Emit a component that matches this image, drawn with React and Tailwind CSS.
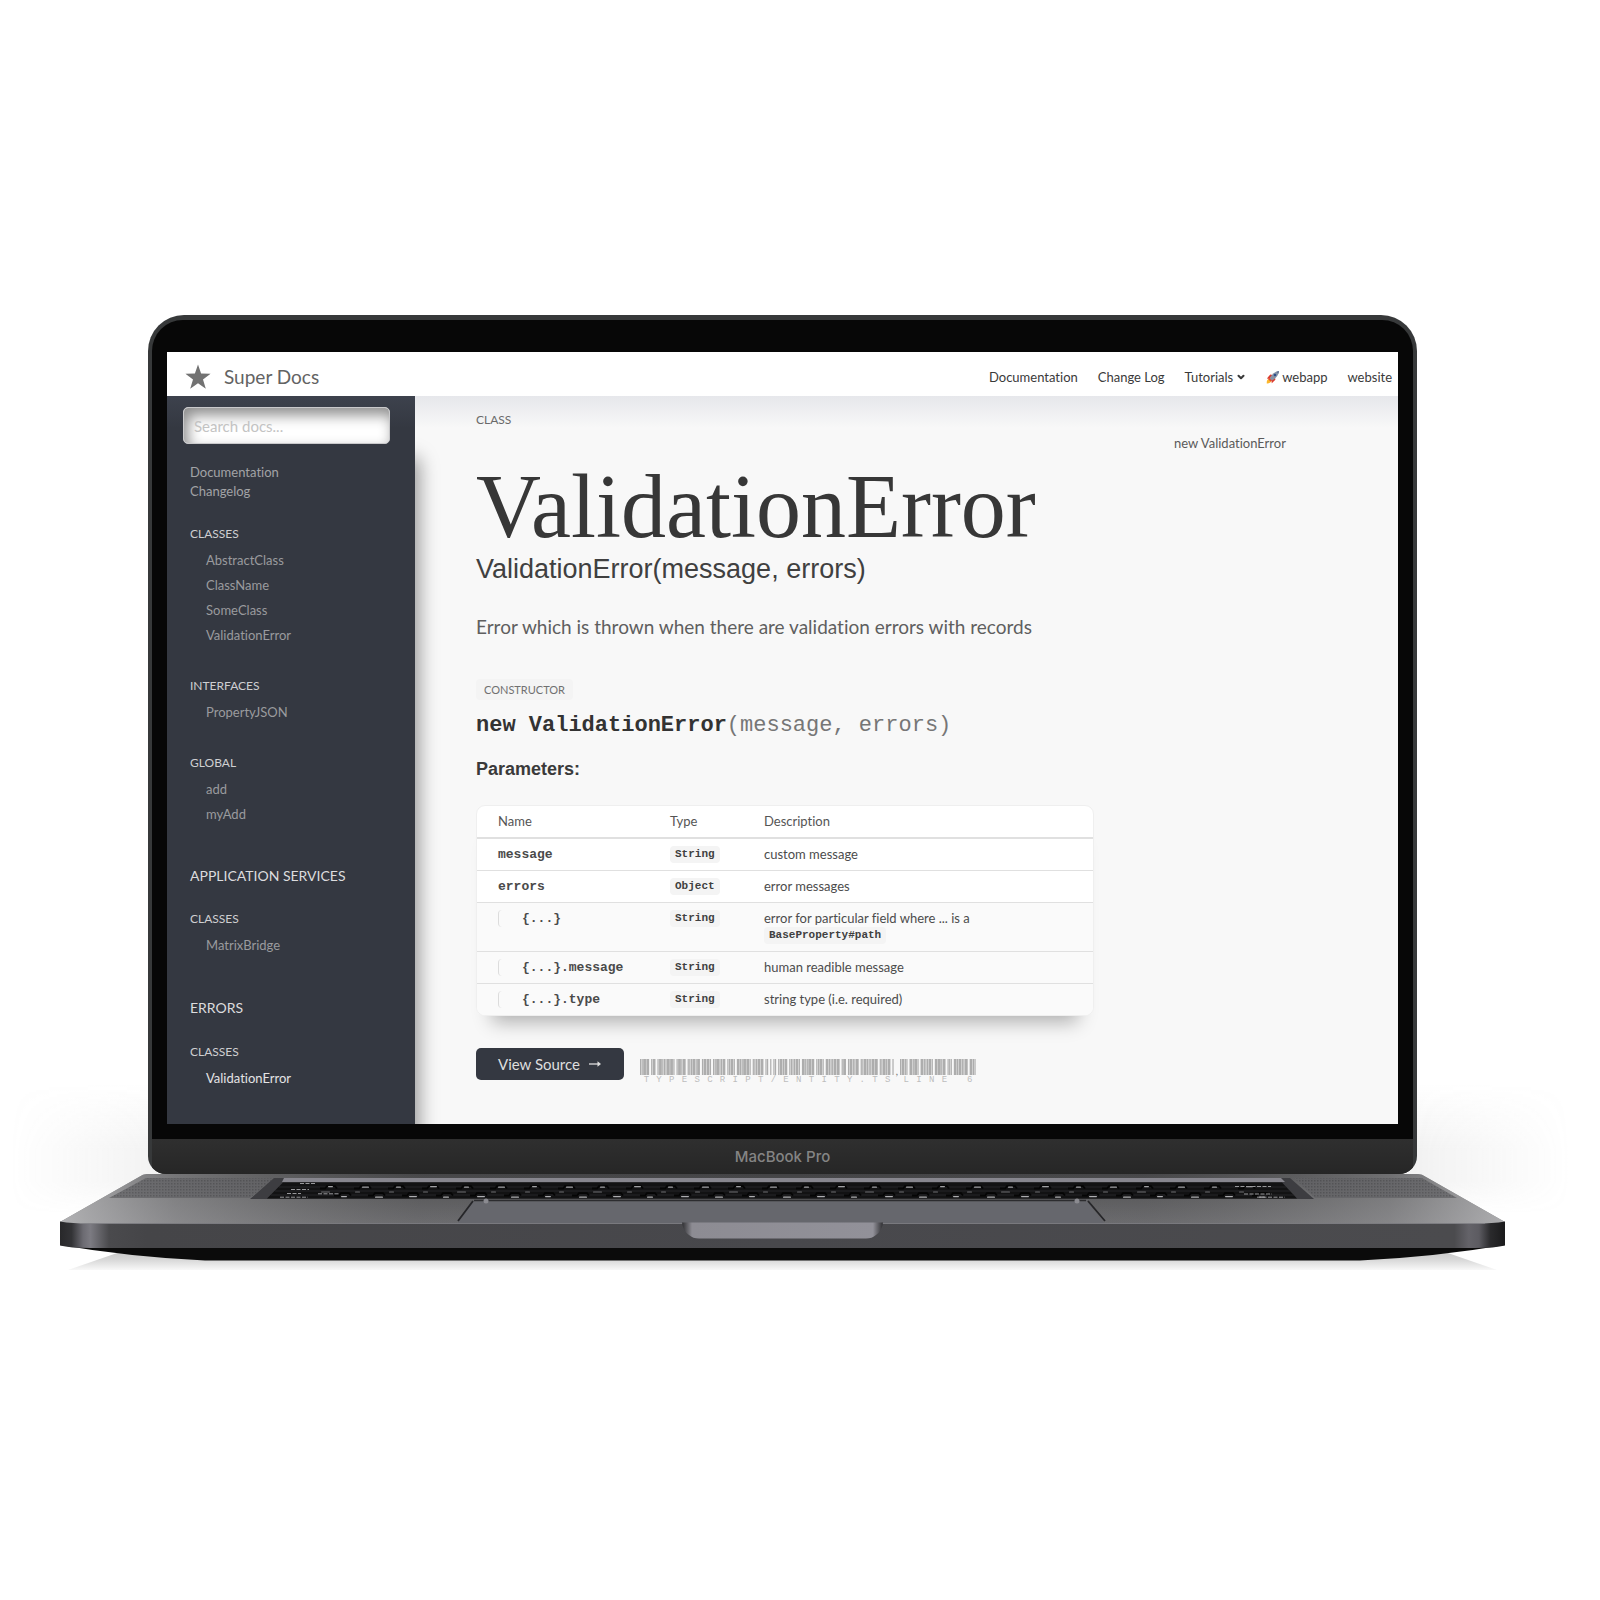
import React from "react";
import { ChevronDown } from "lucide-react";

const CODE39 = {
  A: "wnnnnwnnw", C: "wnwnnwnnn", E: "wnnnwwnnn", I: "nnwnnwwnn", L: "nnwnnnnww",
  N: "nnnnwnnww", P: "nnwnwnnwn", R: "wnnnnnwwn", S: "nnwnnnwwn", T: "nnnnwnwwn",
  Y: "wwnnwnnnn", ".": "wwnnnnwnn", "/": "nwnwnnnwn", " ": "nwwnnnwnn", 6: "nnwwwnnnn",
};

function Barcode({ text, className }) {
  const bars = [];
  let x = 0;
  [...text].forEach((ch) => {
    [...CODE39[ch]].forEach((e, i) => {
      const w = e === "w" ? 3 : 1;
      if (i % 2 === 0) bars.push([x, w]);
      x += w;
    });
    x += 1;
  });
  return (
    <span className={`flex flex-col ${className}`}>
      <svg className="h-4 w-full" viewBox={`0 0 ${x} 16`} preserveAspectRatio="none" aria-hidden="true">
        {bars.map(([bx, w]) => (
          <rect key={bx} x={bx} y="0" width={w + 0.5} height="16" fill="#adadad" />
        ))}
      </svg>
      <span className="flex font-['Liberation_Mono',monospace] text-[9px] leading-[11px] text-[#bdbdbd]">
        {[...text].map((ch, i) => (
          <span key={i} className="flex-1 text-center">{ch}</span>
        ))}
      </span>
    </span>
  );
}

function Rocket() {
  return (
    <svg className="size-[14px]" viewBox="0 0 14 14" role="img" aria-label="rocket">
      <path d="M0.8 13.4 C0.4 11 1.4 9.2 3.4 8.8 L5.4 10.8 C4.8 12.8 3 13.6 0.8 13.4Z" fill="#fbb72c" />
      <path d="M0.9 8.6 L4.2 4.6 L6.8 5 L3.6 8.9Z" fill="#dc3a2c" />
      <path d="M5.8 13.2 L5.4 10.4 L9 7.4 L9.4 9.8Z" fill="#dc3a2c" />
      <path d="M3.6 9 C5.4 4.6 8.4 1.6 13 1 C12.6 5.4 9.6 8.8 5.4 10.8Z" fill="#8693a6" />
      <path d="M10.4 1.8 L13 1 L12.4 3.8Z" fill="#5d6f94" />
      <circle cx="9" cy="5" r="1.3" fill="#2c4f8c" />
      <path d="M2.4 9.6 L4.6 11.6 L6 10.6 L3.6 8.2Z" fill="#e6452e" />
    </svg>
  );
}

function Section({ title, items, active }) {
  return (
    <section>
      <h3 className="text-[12px] leading-4 text-[#cfcfd1]">{title}</h3>
      <ul className="mt-1.5 pl-4 text-[13px] leading-[25px] text-[#9a9b9e]">
        {items.map((i) => (
          <li key={i}>
            <a href="#item" className={active ? "text-[#e4e4e5]" : ""}>{i}</a>
          </li>
        ))}
      </ul>
    </section>
  );
}

function Sidebar() {
  return (
    <aside className="relative z-10 w-[248px] shrink-0 bg-[#343841] bg-[linear-gradient(to_bottom,#3d424d,#343841_32px)] pt-[11px] pb-[33px] shadow-[4px_62px_18px_rgba(0,0,0,0.4)]">
      <input
        type="text"
        aria-label="Search docs"
        placeholder="Search docs..."
        className="ml-4 block h-[37px] w-[207px] rounded-[5px] border border-[#c9c9cb] bg-white px-2.5 text-[15px] placeholder-[#c3c3c3] shadow-[inset_4px_7px_14px_rgba(0,0,0,0.45)]"
      />
      <div className="pl-[23px]">
        <nav className="mt-[19px] flex flex-col text-[13px] leading-[19px] text-[#a2a3a6]">
          <a href="#documentation">Documentation</a>
          <a href="#changelog">Changelog</a>
        </nav>
        <div className="mt-[25px] flex flex-col gap-[30px]">
          <Section title="CLASSES" items={["AbstractClass", "ClassName", "SomeClass", "ValidationError"]} />
          <Section title="INTERFACES" items={["PropertyJSON"]} />
          <Section title="GLOBAL" items={["add", "myAdd"]} />
        </div>
        <h2 className="mt-[39px] mb-[25px] text-[14px] leading-5 text-[#dcdcde]">APPLICATION SERVICES</h2>
        <Section title="CLASSES" items={["MatrixBridge"]} />
        <h2 className="mt-10 mb-[26px] text-[14px] leading-5 text-[#dcdcde]">ERRORS</h2>
        <Section title="CLASSES" items={["ValidationError"]} active />
      </div>
    </aside>
  );
}

function TypeTag({ children }) {
  return (
    <div className="flex">
      <code className="rounded-[4px] bg-[#f4f4f4] px-[5px] font-['Liberation_Mono',monospace] text-[11px] leading-[17px] font-bold text-[#404040]">
        {children}
      </code>
    </div>
  );
}

const ROWS = [
  { name: "message", type: "String", text: "custom message" },
  { name: "errors", type: "Object", text: "error messages" },
  { name: "{...}", type: "String", text: "error for particular field where ... is a", code: "BaseProperty#path", sub: true },
  { name: "{...}.message", type: "String", text: "human readible message", sub: true },
  { name: "{...}.type", type: "String", text: "string type (i.e. required)", sub: true },
];

function Params() {
  return (
    <div className="mt-6 rounded-[9px] shadow-[0_22px_18px_-16px_rgba(0,0,0,0.3)]">
      <div className="overflow-hidden rounded-[9px] border border-[#efefef] bg-white">
        <table className="w-full table-fixed border-collapse text-left text-[13px] leading-[17px] text-[#4c4c4c]">
          <colgroup>
            <col className="w-[193px]" />
            <col className="w-[94px]" />
            <col />
          </colgroup>
          <thead>
            <tr className="text-[#555]">
              <th className="py-[7px] pl-[21px] font-normal">Name</th>
              <th className="font-normal">Type</th>
              <th className="font-normal">Description</th>
            </tr>
          </thead>
          <tbody>
            {ROWS.map((r, i) => (
              <tr
                key={r.name}
                className={`align-top ${i === 0 ? "border-t-2" : "border-t"} border-[#e0e0e0] ${r.sub ? "bg-[#fafafa]" : ""}`}
              >
                <td className="py-[7px] pl-[21px] font-['Liberation_Mono',monospace] font-bold text-[#4a4a4a]">
                  <span className={r.sub ? "block rounded-[4px] border-l border-[#dcdcdc] pl-[23px]" : "block"}>{r.name}</span>
                </td>
                <td className="py-[7px]"><TypeTag>{r.type}</TypeTag></td>
                <td className="py-[7px]">
                  {r.text}
                  {r.code && <TypeTag>{r.code}</TypeTag>}
                </td>
              </tr>
            ))}
          </tbody>
        </table>
      </div>
    </div>
  );
}

function DocsApp() {
  return (
    <div className="overflow-hidden bg-[#f8f8f8] font-['Lato',sans-serif] [font-variant-ligatures:none]">
      <header className="flex h-11 items-center justify-between bg-white pr-1.5 pl-[18px]">
        <a href="#home" className="flex items-center gap-[13px] pt-1.5 text-[19px] leading-6 text-[#636363]">
          <svg className="size-[26px]" viewBox="0 0 26 26" aria-hidden="true">
            <path d="M13 0.5 L16.1 9.6 L25.6 9.8 L18 15.6 L20.8 24.8 L13 19.3 L5.2 24.8 L8 15.6 L0.4 9.8 L9.9 9.6Z" fill="#727272" />
          </svg>
          Super Docs
        </a>
        <nav className="flex items-center gap-5 pt-1.5 text-[13px] leading-5 text-[#3a3a3a]">
          <a href="#documentation">Documentation</a>
          <a href="#log">Change Log</a>
          <button type="button" className="flex items-center gap-[3px]">
            Tutorials
            <ChevronDown className="size-[10px]" strokeWidth={5} />
          </button>
          <a href="#webapp" className="flex items-center gap-0.5"><Rocket />webapp</a>
          <a href="#website">website</a>
        </nav>
      </header>
      <div className="flex">
        <Sidebar />
        <main className="flex min-w-0 flex-1 bg-[linear-gradient(to_bottom,#e6e7eb,#f8f8f8_32px)] pt-4 pl-[61px]">
          <article className="w-[618px] shrink-0">
            <p className="text-[12px] leading-4 text-[#6a6a6a]">CLASS</p>
            <h1 className="mt-[34px] font-['Liberation_Serif',serif] text-[90px] leading-[90px] text-[#373737]">ValidationError</h1>
            <h2 className="mt-px font-['Liberation_Sans',sans-serif] text-[27px] leading-8 text-[#404040]">ValidationError(message, errors)</h2>
            <p className="mt-7 text-[19px] leading-7 text-[#5f5f5f]">Error which is thrown when there are validation errors with records</p>
            <span className="mt-[38px] block w-fit rounded-[4px] bg-[#f4f4f4] px-2 text-[11px] leading-[21px] text-[#707070]">CONSTRUCTOR</span>
            <h3 className="mt-3 font-['Liberation_Mono',monospace] text-[22px] leading-7 text-[#767676]">
              <b className="text-[#333]">new ValidationError</b>(message, errors)
            </h3>
            <h4 className="mt-[17px] font-['Liberation_Sans',sans-serif] text-[18px] leading-6 font-bold text-[#3a3a3a]">Parameters:</h4>
            <Params />
            <div className="mt-8 flex items-start">
              <button type="button" className="flex h-8 items-center gap-2 rounded-[5px] bg-[#343841] px-[22px] text-[15px] text-[#dedede]">
                View Source
                <svg className="h-2.5 w-3.5" viewBox="0 0 14 10" fill="none" stroke="#dedede" strokeWidth="1.3" aria-hidden="true">
                  <path d="M1 5 H11" />
                  <path d="M9.5 2.2 L13 5 L9.5 7.8Z" fill="#dedede" stroke="none" />
                </svg>
              </button>
              <div className="mt-[11px] ml-4 flex">
                <Barcode text="TYPESCRIPT/ENTITY.TS" className="w-[254px]" />
                <span className="w-1.5 pt-1 text-center text-[12px] leading-4 text-[#888]">,</span>
                <Barcode text="LINE 6" className="w-[76px]" />
              </div>
            </div>
          </article>
          <aside className="mt-[22px] ml-20 text-[13px] leading-[18px] text-[#5a5a5a]">
            <a href="#ctor">new ValidationError</a>
          </aside>
        </main>
      </div>
    </div>
  );
}

function Keys() {
  return Array.from({ length: 28 }, (_, i) => {
    const x = 268 + i * 34;
    return (
      <g key={i}>
        <path d={`M${x - 8} 14.5 h5 l2 -2.4 h8 l2 2.4`} stroke="#050505" strokeWidth="1.8" fill="none" />
        <rect x={x} y={12 + (i % 3 === 0 ? 0 : 0.6)} width={i % 2 ? 7 : 5} height="1.2" rx="0.6" fill="#a0a0a3" />
        <path d={`M${x + 6} 21.5 h5 l2 -2.4 h8 l2 2.4`} stroke="#050505" strokeWidth="1.8" fill="none" />
        <rect x={x + 13} y={22 + (i % 2) * 0.6} width={i % 3 ? 8 : 6} height="1.2" rx="0.6" fill="#adadb0" />
        <rect x={x - 7} y="17.4" width={i % 4 ? 5 : 9} height="1" rx="0.5" fill="#6f6f72" />
      </g>
    );
  });
}

const DECK = "M87 0 H1358 Q1362 0 1366 3 L1445 48 V51 H0 V48 L79 3 Q83 0 87 0Z";

function LaptopBase() {
  return (
    <svg className="block w-full overflow-visible" viewBox="0 0 1445 98" aria-hidden="true">
      <defs>
        <linearGradient id="deck" x1="0" y1="0" x2="0" y2="1">
          <stop offset="0" stopColor="#434345" />
          <stop offset="0.45" stopColor="#5a5a5c" />
          <stop offset="1" stopColor="#6b6b6e" />
        </linearGradient>
        <linearGradient id="deckSides" x1="0" y1="0" x2="1" y2="0">
          <stop offset="0" stopColor="#c4c4c6" stopOpacity="0.8" />
          <stop offset="0.08" stopColor="#b0b0b2" stopOpacity="0.45" />
          <stop offset="0.25" stopColor="#888" stopOpacity="0.05" />
          <stop offset="0.5" stopColor="#888" stopOpacity="0" />
          <stop offset="0.75" stopColor="#888" stopOpacity="0.05" />
          <stop offset="0.92" stopColor="#b0b0b2" stopOpacity="0.4" />
          <stop offset="1" stopColor="#c4c4c6" stopOpacity="0.75" />
        </linearGradient>
        <linearGradient id="front" x1="0" y1="0" x2="1" y2="0">
          <stop offset="0" stopColor="#28282a" />
          <stop offset="0.008" stopColor="#333336" />
          <stop offset="0.016" stopColor="#6c6b72" />
          <stop offset="0.021" stopColor="#7c7b82" />
          <stop offset="0.034" stopColor="#4a4a4d" />
          <stop offset="0.06" stopColor="#454548" />
          <stop offset="0.5" stopColor="#48484c" />
          <stop offset="0.965" stopColor="#4b4b4e" />
          <stop offset="0.975" stopColor="#646369" />
          <stop offset="0.982" stopColor="#5c5b61" />
          <stop offset="0.99" stopColor="#2a2a2c" />
          <stop offset="1" stopColor="#1a1a1b" />
        </linearGradient>
        <linearGradient id="floor" x1="0" y1="0" x2="0" y2="1">
          <stop offset="0" stopColor="#c8c8c8" />
          <stop offset="0.4" stopColor="#d6d6d6" />
          <stop offset="1" stopColor="#f8f8f8" />
        </linearGradient>
        <linearGradient id="notch" x1="0" y1="0" x2="1" y2="0">
          <stop offset="0" stopColor="#2e2e31" />
          <stop offset="0.05" stopColor="#8d8c93" />
          <stop offset="0.95" stopColor="#929199" />
          <stop offset="1" stopColor="#2e2e31" />
        </linearGradient>
        <linearGradient id="halo" x1="0" y1="0" x2="0" y2="1">
          <stop offset="0" stopColor="#888" stopOpacity="0" />
          <stop offset="0.5" stopColor="#888" stopOpacity="0.11" />
          <stop offset="0.75" stopColor="#888" stopOpacity="0.11" />
          <stop offset="1" stopColor="#888" stopOpacity="0" />
        </linearGradient>
        <linearGradient id="fade" x1="0" y1="0" x2="1" y2="0">
          <stop offset="0" stopColor="#000" />
          <stop offset="0.1" stopColor="#fff" />
          <stop offset="0.9" stopColor="#fff" />
          <stop offset="1" stopColor="#000" />
        </linearGradient>
        <mask id="haloMask" maskUnits="userSpaceOnUse" x="-50" y="-100" width="1560" height="180">
          <rect x="-50" y="-100" width="1560" height="180" fill="url(#fade)" />
        </mask>
        <pattern id="grille" width="3" height="3" patternUnits="userSpaceOnUse">
          <rect width="3" height="3" fill="#626265" />
          <rect width="1.5" height="1.5" fill="#4b4b4e" />
        </pattern>
      </defs>
      <rect x="-50" y="-90" width="1560" height="130" fill="url(#halo)" mask="url(#haloMask)" />
      <path d="M8 96 L60 78 H1385 L1437 96Z" fill="url(#floor)" />
      <path d="M0 71 Q70 83 145 86.5 H1300 Q1375 83 1445 71Z" fill="#0b0b0b" />
      <path d={DECK} fill="url(#deck)" />
      <path d={DECK} fill="url(#deckSides)" />
      <path d="M86 4 H214 L190 24 H49Z" fill="url(#grille)" opacity="0.75" />
      <path d="M1234 4 H1362 L1397 24 H1255Z" fill="url(#grille)" opacity="0.75" />
      <path d="M214 4 H1230 L1254 25 H190Z" fill="#3d3d41" />
      <path d="M224 4 H1221 L1225 8 H222Z" fill="#87868e" />
      <path d="M223 8.5 H1222 L1237 24.5 H207Z" fill="#121213" />
      <path d="M219 13 H1226 M215 17 H1230 M211 21 H1234" stroke="#2c2c2e" strokeWidth="0.8" />
      <Keys />
      <path d="M240 9.5 h16 M231 15.5 h18 M227 19.5 h14 M258 19.8 h22 M220 23.2 h28" stroke="#98989b" strokeWidth="1" strokeDasharray="4 1.5" />
      <path d="M1175 12.5 h36 M1184 20 h28 M1197 23.2 h28" stroke="#98989b" strokeWidth="1" strokeDasharray="4 1.5" />
      <path d="M414 26 H1026 L1044 49 H398Z" fill="#66676d" />
      <path d="M414 26.5 H1026" stroke="#2c2c2f" strokeWidth="1.6" />
      <path d="M398 47 L413 27 M1045 47 L1028 27" stroke="#262629" strokeWidth="1.8" />
      <circle cx="426" cy="27" r="2.5" fill="#8a8a90" />
      <circle cx="1017" cy="27" r="2.5" fill="#8a8a90" />
      <path d="M0 47.5 Q12 49.5 30 49.5 H1415 Q1433 49.5 1445 47.5 V71.5 Q1435 74 1415 74 H30 Q10 74 0 71.5Z" fill="url(#front)" />
      <path d="M20 49.5 H1425" stroke="#828286" strokeWidth="0.8" />
      <path d="M622 48.5 H823 Q822 57 816 61 Q812 64.5 806 64.5 H639 Q633 64.5 629 61 Q623 57 622 48.5Z" fill="url(#notch)" />
    </svg>
  );
}

export default function App() {
  return (
    <div className="min-h-screen bg-white pt-[315px] pr-[95px] pl-[60px]">
      <div className="relative z-10 mx-[88px] overflow-hidden rounded-t-[36px] rounded-b-[18px] bg-[#37393a] px-[4px] pt-[5px]">
        <div className="rounded-t-[31px] bg-[#070707] px-[15px] pt-8 pb-[15px]">
          <DocsApp />
        </div>
        <div className="flex h-[35px] items-center justify-center bg-[linear-gradient(to_bottom,#2f2f2f,#262626)] font-['Inter',sans-serif] text-[15px] leading-5 font-medium text-[#848484]">
          MacBook Pro
        </div>
      </div>
      <LaptopBase />
    </div>
  );
}
